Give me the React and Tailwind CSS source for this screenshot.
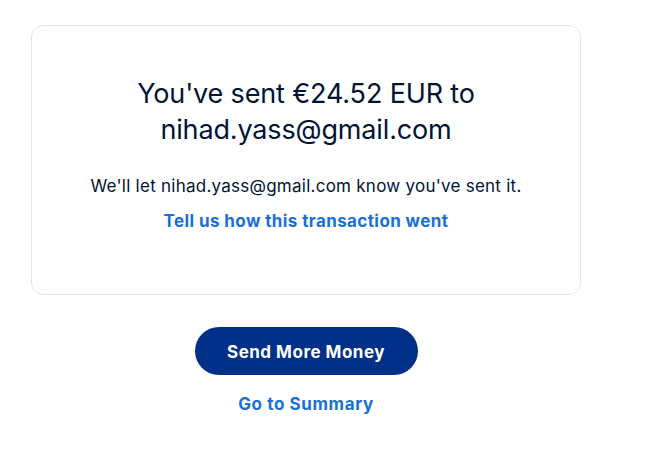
import React from "react";

const App = () => {
  return (
    <div className="min-h-[473px] w-full bg-white font-['Inter','Liberation_Sans',sans-serif] text-[#001435]">
      <div className="w-[550px] ml-[31px] pt-[25px]">
        {/* карточка подтверждения */}
        <div className="h-[270px] rounded-[12px] border border-[#e6e6e6] flex flex-col items-center pt-[50px]">
          <h1 className="text-[27px] leading-[36px] font-normal text-center tracking-[-0.15px]">
            You've sent €24.52 EUR to
            <br />
            nihad.yass@gmail.com
          </h1>
          <p className="mt-[26px] text-[17px] leading-[24px] tracking-[0.25px]">
            We'll let nihad.yass@gmail.com know you've sent it.
          </p>
          <a
            href="#"
            className="mt-[11px] text-[17px] leading-[24px] font-bold tracking-[0.4px] text-[#1a6fd6]"
          >
            Tell us how this transaction went
          </a>
        </div>

        {/* кнопки */}
        <div className="flex flex-col items-center mt-[32px]">
          <button
            type="button"
            className="w-[223px] h-[48px] pt-[3px] rounded-full bg-[#003087] text-white text-[17px] font-bold tracking-[0.5px]"
          >
            Send More Money
          </button>
          <a
            href="#"
            className="mt-[17px] text-[17px] leading-[24px] font-bold tracking-[0.6px] text-[#1a6fd6]"
          >
            Go to Summary
          </a>
        </div>
      </div>
    </div>
  );
};

export default App;
